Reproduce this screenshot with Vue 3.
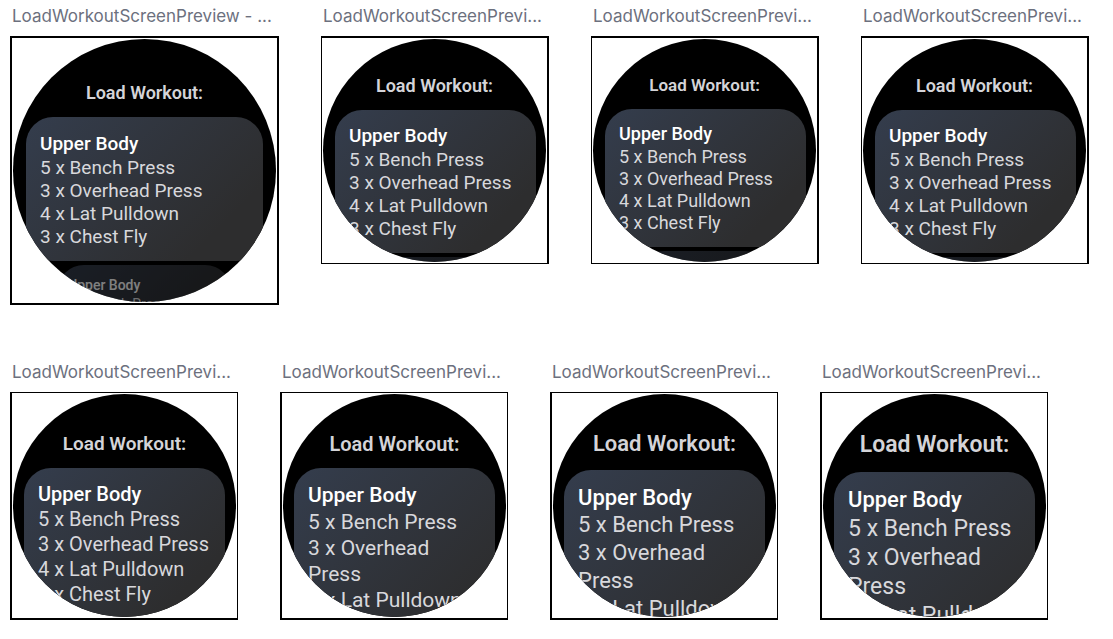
<script setup>
const exercises = ['5 x Bench Press', '3 x Overhead Press', '4 x Lat Pulldown', '3 x Chest Fly']
const shortLabel = 'LoadWorkoutScreenPrevi...'

const previews = [
  { id: 1, label: 'LoadWorkoutScreenPreview - ...', variant: 'large', edge: 'full' },
  { id: 2, label: shortLabel, variant: 'regular', edge: 'upper' },
  { id: 3, label: shortLabel, variant: 'small', edge: 'upper' },
  { id: 4, label: shortLabel, variant: 'regular', edge: 'upper' },
  { id: 5, label: shortLabel, variant: 'medium', edge: 'lower' },
  { id: 6, label: shortLabel, variant: 'big', edge: 'lower' },
  { id: 7, label: shortLabel, variant: 'bigger', edge: 'lower' },
  { id: 8, label: shortLabel, variant: 'biggest', edge: 'lower' }
]
</script>

<template>
  <main class="gallery">
    <figure v-for="p in previews" :key="p.id" class="preview" :class="p.variant">
      <figcaption class="label">{{ p.label }}</figcaption>
      <div class="frame" :class="p.edge">
        <div class="watch">
          <header class="heading">
            <h2 class="title">Load Workout:</h2>
          </header>
          <article class="card">
            <h3 class="name">Upper Body</h3>
            <ul class="list">
              <li v-for="e in exercises" :key="e">{{ e }}</li>
            </ul>
          </article>
          <article v-if="p.edge !== 'lower'" class="card next">
            <template v-if="p.edge === 'full'">
              <h3 class="name">Upper Body</h3>
              <ul class="list">
                <li>{{ exercises[0] }}</li>
              </ul>
            </template>
          </article>
        </div>
      </div>
    </figure>
  </main>
</template>

<style>
body {
  margin: 0;
  background: #fff;
}
</style>

<style scoped>
.gallery {
  display: flex;
  flex-wrap: wrap;
  align-items: flex-start;
  gap: 51px 42px;
  padding: 0 10px;
}

.preview {
  --size: 228px;
  --title-gap: 12px;
  --pad-top: 14px;
  margin: 0;
  width: var(--size);
}

.label {
  padding: 6px 0 10px 2px;
  font: 400 17px/20px Inter, sans-serif;
  color: #6c707e;
  white-space: nowrap;
}

.frame {
  box-sizing: border-box;
  height: var(--size);
  padding: 1px;
  border: 1px solid #000;
  background: #fff;
}

.frame.full {
  border-width: 2px;
}

.frame.upper {
  border-width: 2px 2px 1px 1px;
}

.frame.lower {
  border-width: 1px 1px 2px 2px;
}

.watch {
  height: 100%;
  overflow: hidden;
  border-radius: 50%;
  background: #000;
  font-family: Roboto, sans-serif;
}

.heading {
  display: flex;
  box-sizing: border-box;
  height: var(--head);
  align-items: flex-end;
  justify-content: center;
  padding-bottom: var(--title-gap);
}

.title {
  margin: 0;
  font-size: var(--title);
  line-height: 24px;
  font-weight: 600;
  color: #d4d4d8;
  white-space: nowrap;
}

.card {
  margin: 0 11px 4px;
  padding: var(--pad-top) 14px 13px;
  border-radius: 27px;
  background: linear-gradient(135deg, #343d4d 0%, #2d2d2e 80%);
  color: #d8d8dc;
}

.full .card {
  margin: 0 13px 4px;
}

.upper .card {
  margin: 0 10px 4px 12px;
}

.name {
  margin: 0;
  font-size: var(--name);
  line-height: var(--name-line);
  font-weight: 500;
  color: #fff;
}

.list {
  margin: 0;
  padding: 0;
  list-style: none;
  font-size: var(--text);
  line-height: var(--line);
}

.watch .card.next {
  --name: 14px;
  --text: 14px;
  --name-line: 20px;
  --line: 18px;
  min-height: 60px;
  margin: 0 44px;
  padding: 10px 11px;
  opacity: 0.5;
}

.large {
  --size: 269px;
  --head: 78px;
  --title: 18px;
  --name: 19px;
  --name-line: 25px;
  --text: 19px;
  --line: 23px;
}

.regular {
  --head: 71px;
  --pad-top: 13px;
  --title: 18px;
  --name: 19px;
  --name-line: 25px;
  --text: 19px;
  --line: 23px;
}

.small {
  --head: 70px;
  --pad-top: 13px;
  --title: 17px;
  --name: 18px;
  --name-line: 24px;
  --text: 18px;
  --line: 22px;
}

.medium {
  --head: 74px;
  --title: 19px;
  --name: 20px;
  --name-line: 25px;
  --text: 20px;
  --line: 25px;
}

.big {
  --head: 74px;
  --title: 20px;
  --name: 21px;
  --name-line: 27px;
  --text: 21px;
  --line: 26px;
}

.bigger {
  --head: 76px;
  --title-gap: 14px;
  --title: 22px;
  --name: 22px;
  --name-line: 27px;
  --text: 22px;
  --line: 28px;
}

.biggest {
  --head: 78px;
  --title-gap: 15px;
  --title: 23px;
  --name: 22px;
  --name-line: 28px;
  --text: 23px;
  --line: 29px;
}
</style>
